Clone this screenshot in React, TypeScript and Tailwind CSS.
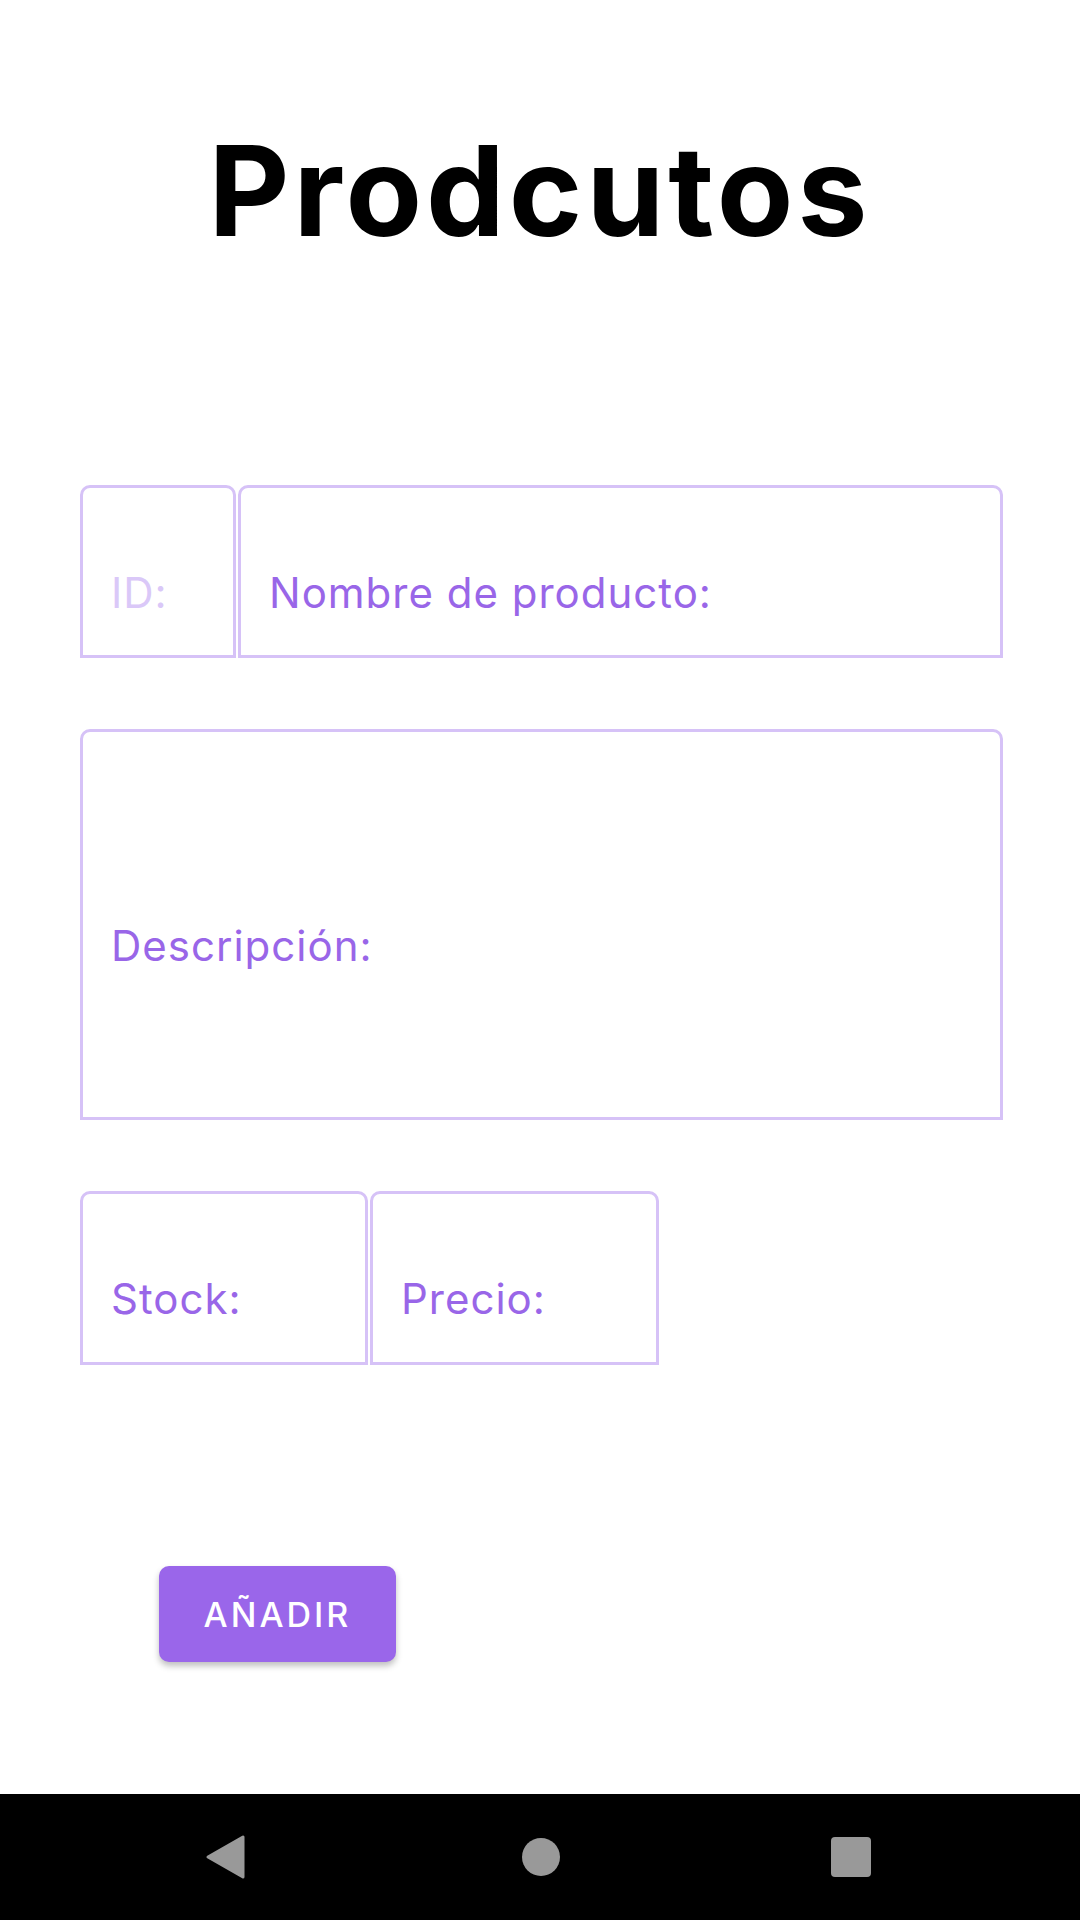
import React from 'react';

const font = { fontFamily: 'Inter, "Noto Sans", sans-serif' };

interface FieldProps {
  label: string;
  className: string;
  muted?: boolean;
}

// outlined field: rounded top corners, square bottom, label sits a bit below center
function Field({ label, className, muted }: FieldProps) {
  return (
    <div
      className={`flex items-center pt-[42px] pl-[28px] border-[3px] border-[#d6c2f7] rounded-t-[10px] ${className}`}
    >
      <span
        className={`text-[42px] leading-none tracking-[1px] ${muted ? 'text-[#dac8f8]' : 'text-[#9966e8]'}`}
      >
        {label}
      </span>
    </div>
  );
}

export default function App() {
  return (
    <div className="min-h-[1920px] flex flex-col bg-white" style={font}>
      <div className="flex-1 pt-[128px]">
        {/* Title */}
        <h1 className="text-center text-[125px] leading-none font-bold text-black tracking-[4px]">
          Prodcutos
        </h1>

        {/* Form */}
        <div className="mt-[232px] ml-[80px] w-[923px] flex flex-col">
          <div className="flex gap-[2px] h-[173px]">
            <Field label="ID:" className="w-[156px]" muted />
            <Field label="Nombre de producto:" className="flex-1" />
          </div>

          <div className="mt-[71px] flex h-[391px]">
            <Field label="Descripción:" className="flex-1" />
          </div>

          <div className="mt-[71px] flex gap-[2px] h-[174px]">
            <Field label="Stock:" className="w-[288px]" />
            <Field label="Precio:" className="w-[289px]" />
          </div>

          <button className="mt-[201px] ml-[79px] w-[237px] h-[96px] rounded-[10px] bg-[#9a66ea] text-white text-[34px] font-medium tracking-[3px] shadow-[0_4px_6px_rgba(0,0,0,0.25)] flex items-center justify-center">
            AÑADIR
          </button>
        </div>
      </div>

      {/* Android navigation bar */}
      <div className="h-[126px] bg-black flex items-center">
        <svg className="ml-[205px]" width="40" height="46" viewBox="0 0 40 46">
          <path d="M38 3 L38 43 L3 23 Z" fill="#999999" stroke="#999999" strokeWidth="3" strokeLinejoin="round" />
        </svg>
        <div className="ml-[277px] w-[38px] h-[38px] rounded-full bg-[#999999]" />
        <div className="ml-[271px] w-[40px] h-[40px] rounded-[4px] bg-[#999999]" />
      </div>
    </div>
  );
}
